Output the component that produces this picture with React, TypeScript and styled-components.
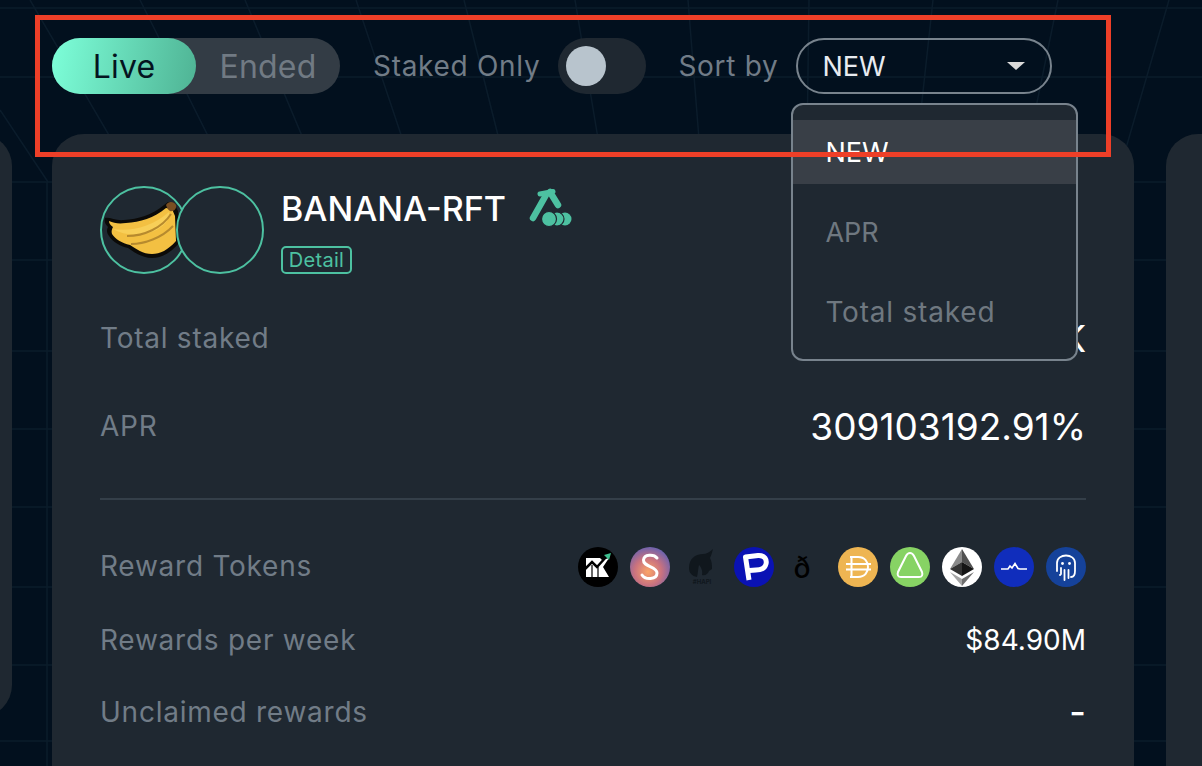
import styled, { createGlobalStyle } from "styled-components";

const GlobalStyle = createGlobalStyle`
  html, body {
    margin: 0;
    padding: 0;
    background: #02101e;
    font-family: "Inter", "Open Sans", sans-serif;
  }
`;

const topLines = [30, 140, 245, 356, 464, 575, 688, 809, 933, 1058, 1169];
const rowLines = [8, 77, 182, 260, 351, 429, 507, 587, 665, 741];

function GridLines() {
  return (
    <GridSvg viewBox="0 0 1202 766">
      {topLines.map((x) => (
        <line key={x} x1={x} y1={0} x2={x + ((791 - x) / 1302) * 766} y2={766} />
      ))}
      {rowLines.map((y) => (
        <line key={y} x1={0} y1={y} x2={1202} y2={y} />
      ))}
      <line x1={0} y1={110} x2={48} y2={182} />
      <line x1={47} y1={182} x2={47} y2={766} />
    </GridSvg>
  );
}

function Banana() {
  return (
    <BananaSvg viewBox="0 0 88 88">
      <path
        d="M5 32 C10 31 16 35 24 34 C38 33 52 29 64 19 L68 16 L74 17 L78 25 L80 56 C72 66 62 72 52 72 C42 72 34 66 28 62 C20 60 13 56 9 50 C6 46 7 43 8 41 C5 38 4 35 5 32 Z"
        fill="#0b0a08"
      />
      <path
        d="M9 35 C14 37 18 38 26 37 C40 36 54 32 66 22 L72 23 L75 30 L76 55 C68 64 60 68 52 68 C43 68 36 63 30 59 C22 57 15 53 12 48 C11 45 12 43 13 41 C10 39 9 37 9 35 Z"
        fill="#f3c042"
      />
      <path
        d="M13 43 C30 46 52 41 69 26 C70 33 66 38 58 43 C46 50 26 51 13 43 Z"
        fill="#f8cf58"
      />
      <path
        d="M31 58 C44 58 62 52 73 40 M27 50 C44 50 62 42 71 28"
        fill="none"
        stroke="#b78a2e"
        strokeWidth={2}
      />
      <path d="M66 19 C68 15 74 15 76 19 C77 23 73 26 70 25 C68 24 67 22 66 19 Z" fill="#7a4f22" />
    </BananaSvg>
  );
}

function PickIcon() {
  return (
    <PickSvg viewBox="0 0 44 40">
      <path d="M4 30 L17 7" stroke="#4dc1a1" strokeWidth={6.5} strokeLinecap="round" fill="none" />
      <path d="M11 6 L24 3.5" stroke="#4dc1a1" strokeWidth={5} strokeLinecap="round" fill="none" />
      <path d="M21 4 L29 17" stroke="#4dc1a1" strokeWidth={6.5} strokeLinecap="round" fill="none" />
      <circle cx={36} cy={31} r={6.5} fill="#4dc1a1" />
      <circle cx={28} cy={31} r={7} fill="#4dc1a1" stroke="#1f2831" strokeWidth={1.2} />
      <circle cx={20} cy={31} r={7.5} fill="#4dc1a1" stroke="#1f2831" strokeWidth={1.2} />
    </PickSvg>
  );
}

function Tokens() {
  return (
    <TokenList>
      <TokenSvg viewBox="0 0 40 40">
        <circle cx={20} cy={20} r={20} fill="#000" />
        <path d="M8 11 H22 L24 13 L31 11 L25 20 L31 30 H8 Z" fill="#fff" />
        <path d="M6 23 L14 15 L19 20 L29 9" fill="none" stroke="#000" strokeWidth={2.5} />
        <path d="M14 18 V30 M20 20 V30" stroke="#000" strokeWidth={1.2} />
        <path d="M26 8 L33 6 L31 13 Z" fill="#3fc08f" />
      </TokenSvg>
      <TokenSvg viewBox="0 0 40 40">
        <defs>
          <radialGradient id="sGrad" cx="45%" cy="62%" r="62%">
            <stop offset="0%" stopColor="#fba568" />
            <stop offset="55%" stopColor="#c9727f" />
            <stop offset="100%" stopColor="#6f63ad" />
          </radialGradient>
        </defs>
        <circle cx={20} cy={20} r={20} fill="url(#sGrad)" />
        <path
          d="M27 11 C24 7 14 7 13.5 13 C13 20 27 19 27 26 C27 33 15 33 12 28"
          fill="none"
          stroke="#fff"
          strokeWidth={3}
          strokeLinecap="round"
        />
      </TokenSvg>
      <TokenSvg viewBox="0 0 40 40">
        <path
          d="M7 21 C7 12 13 7 21 7 C24 7 28 5 31 2 C30 6 29 9 28 11 C30 15 30 18 30 22 L27 24 C26 27 23 29 20 28 C21 24 19 20 17 18 C16 22 16 26 15 30 C10 29 7 26 7 21 Z"
          fill="#10171d"
        />
        <HapiText x={20} y={37} textAnchor="middle">
          #HAPI
        </HapiText>
      </TokenSvg>
      <TokenSvg viewBox="0 0 40 40">
        <circle cx={20} cy={20} r={20} fill="#0a12b4" />
        <path
          d="M15 33 L11.5 10 L24 8.5 C31 8 33 13 32 17 C31 21 27 23 22 23 L15.5 23.5"
          fill="none"
          stroke="#fff"
          strokeWidth={5}
          strokeLinejoin="round"
        />
      </TokenSvg>
      <EthGlyph>ð</EthGlyph>
      <TokenSvg viewBox="0 0 40 40">
        <circle cx={20} cy={20} r={20} fill="#eeb552" />
        <path
          d="M12 10 H20 C27 10 30 15 30 20 C30 25 27 30 20 30 H12 M13.5 10 V30 M8 17 H33 M8 22.5 H33"
          fill="none"
          stroke="#fff"
          strokeWidth={2}
        />
      </TokenSvg>
      <TokenSvg viewBox="0 0 40 40">
        <circle cx={20} cy={20} r={20} fill="#87d364" />
        <path
          d="M20 6 C22 6 23 7 24 9 L32 25 C33 28 32 30 29 30 H11 C8 30 7 28 8 25 L16 9 C17 7 18 6 20 6 Z"
          fill="none"
          stroke="#fff"
          strokeWidth={2}
        />
      </TokenSvg>
      <TokenSvg viewBox="0 0 40 40">
        <circle cx={20} cy={20} r={20} fill="#fff" />
        <path d="M20 2 L8 22 L20 15 Z" fill="#8a8a8a" />
        <path d="M20 2 L32 22 L20 15 Z" fill="#505050" />
        <path d="M8 22 L20 15 V29 Z" fill="#343434" />
        <path d="M32 22 L20 15 V29 Z" fill="#141414" />
        <path d="M8 25 L20 32 V39 Z" fill="#a4a4a4" />
        <path d="M32 25 L20 32 V39 Z" fill="#6e6e6e" />
      </TokenSvg>
      <TokenSvg viewBox="0 0 40 40">
        <circle cx={20} cy={20} r={20} fill="#102dbc" />
        <path
          d="M7 22 H14 L16 19 L18 21 L21 16.5 L24 21.5 L26 22 H33"
          fill="none"
          stroke="#fff"
          strokeWidth={1.6}
        />
      </TokenSvg>
      <TokenSvg viewBox="0 0 40 40">
        <circle cx={20} cy={20} r={20} fill="#15429a" />
        <path
          d="M11 24 V16 C11 6 29 6 29 16 V24 C29 29 27 30 25 30 M15 21 V27 M18.5 23 V33 M22.5 23 V31 M15 27 L14 28"
          fill="none"
          stroke="#fff"
          strokeWidth={1.8}
          strokeLinecap="round"
        />
        <circle cx={16.5} cy={16.5} r={1.4} fill="#fff" />
        <circle cx={23.5} cy={16.5} r={1.4} fill="#fff" />
      </TokenSvg>
    </TokenList>
  );
}

function App() {
  return (
    <Page>
      <GlobalStyle />
      <GridLines />
      <Toolbar>
        <Tabs>
          <Tab $active>Live</Tab>
          <Tab>Ended</Tab>
        </Tabs>
        <ToolLabel $left={33} $right={18}>
          Staked Only
        </ToolLabel>
        <Toggle>
          <Knob />
        </Toggle>
        <ToolLabel $left={32} $right={18}>
          Sort by
        </ToolLabel>
        <SelectWrap>
          <Select>
            NEW
            <Caret />
          </Select>
          <Menu>
            <MenuItem $active>NEW</MenuItem>
            <MenuItem>APR</MenuItem>
            <MenuItem $spread>Total staked</MenuItem>
          </Menu>
        </SelectWrap>
      </Toolbar>
      <Cards>
        <SideCard />
        <Card>
          <CardHeader>
            <Avatars>
              <Avatar>
                <Banana />
              </Avatar>
              <Avatar />
            </Avatars>
            <TitleBlock>
              <TitleRow>
                <Title>BANANA-RFT</Title>
                <PickIcon />
              </TitleRow>
              <DetailTag>Detail</DetailTag>
            </TitleBlock>
          </CardHeader>
          <BigRow>
            <Label>Total staked</Label>
            <BigValue>$1.63K</BigValue>
          </BigRow>
          <BigRow>
            <Label>APR</Label>
            <BigValue>309103192.91%</BigValue>
          </BigRow>
          <Divider />
          <Row $top={47}>
            <RowLabel>Reward Tokens</RowLabel>
            <Tokens />
          </Row>
          <Row $top={34}>
            <RowLabel>Rewards per week</RowLabel>
            <Value>$84.90M</Value>
          </Row>
          <Row $top={32}>
            <RowLabel>Unclaimed rewards</RowLabel>
            <DashValue>-</DashValue>
          </Row>
        </Card>
        <RightCard />
      </Cards>
      <Highlight />
    </Page>
  );
}

const Page = styled.div`
  position: relative;
  height: 100vh;
  overflow: hidden;
  padding-top: 38px;
  box-sizing: border-box;
`;

const GridSvg = styled.svg`
  position: absolute;
  inset: 0;
  width: 100%;
  height: 100%;
  line {
    stroke: #0b1c2b;
    stroke-width: 1.5;
  }
`;

const Toolbar = styled.div`
  position: relative;
  z-index: 2;
  display: flex;
  align-items: center;
  height: 56px;
  margin-left: 52px;
`;

const Tabs = styled.div`
  display: flex;
  width: 288px;
  height: 56px;
  border-radius: 28px;
  background: #333c45;
`;

const Tab = styled.div<{ $active?: boolean }>`
  width: 144px;
  height: 56px;
  border-radius: 28px;
  display: flex;
  align-items: center;
  justify-content: center;
  font-size: 32px;
  letter-spacing: 0.2px;
  color: ${(p) => (p.$active ? "#04141f" : "#717a83")};
  background: ${(p) =>
    p.$active ? "linear-gradient(100deg, #7dffd9 0%, #4fb394 100%)" : "transparent"};
`;

const ToolLabel = styled.div<{ $left: number; $right: number }>`
  margin-left: ${(p) => p.$left}px;
  margin-right: ${(p) => p.$right}px;
  font-size: 28px;
  letter-spacing: 0.7px;
  color: #717c87;
  white-space: nowrap;
`;

const Toggle = styled.div`
  width: 88px;
  height: 56px;
  border-radius: 28px;
  background: #1f2831;
  display: flex;
  align-items: center;
  padding-left: 8px;
  box-sizing: border-box;
`;

const Knob = styled.div`
  width: 40px;
  height: 40px;
  border-radius: 50%;
  background: #b8c4cd;
`;

const SelectWrap = styled.div`
  position: relative;
`;

const Select = styled.div`
  width: 256px;
  height: 56px;
  box-sizing: border-box;
  border: 2px solid #78838d;
  border-radius: 28px;
  padding: 0 25px 0 24px;
  display: flex;
  align-items: center;
  justify-content: space-between;
  font-size: 27px;
  color: #e8ebf0;
`;

const Caret = styled.span`
  width: 0;
  height: 0;
  border-left: 9px solid transparent;
  border-right: 9px solid transparent;
  border-top: 8px solid #d9d9d9;
`;

const Menu = styled.div`
  position: absolute;
  left: -5px;
  top: 65px;
  width: 287px;
  height: 258px;
  box-sizing: border-box;
  padding: 15px 0;
  display: flex;
  flex-direction: column;
  gap: 16px;
  border: 2px solid #78838d;
  border-radius: 12px;
  background: #1f2831;
`;

const MenuItem = styled.div<{ $active?: boolean; $spread?: boolean }>`
  height: 64px;
  flex-shrink: 0;
  display: flex;
  align-items: center;
  padding-left: 32px;
  font-size: ${(p) => (p.$spread ? 28 : 27)}px;
  letter-spacing: ${(p) => (p.$spread ? 0.8 : 0)}px;
  color: ${(p) => (p.$active ? "#ffffff" : "#6f7880")};
  background: ${(p) => (p.$active ? "#393f47" : "transparent")};
`;

const Cards = styled.div`
  display: flex;
  align-items: flex-start;
  margin-top: 40px;
  position: relative;
`;

const SideCard = styled.div`
  width: 1082px;
  height: 583px;
  margin-left: -1070px;
  margin-right: 40px;
  background: #1f2831;
  border-radius: 32px;
  flex-shrink: 0;
`;

const Card = styled.div`
  width: 1082px;
  height: 700px;
  box-sizing: border-box;
  padding: 52px 48px 0;
  background: #1f2831;
  border-radius: 32px 32px 0 0;
  flex-shrink: 0;
`;

const RightCard = styled.div`
  width: 1082px;
  height: 700px;
  margin-left: 32px;
  background: #1f2831;
  border-radius: 32px 32px 0 0;
  flex-shrink: 0;
`;

const CardHeader = styled.div`
  display: flex;
  height: 88px;
  margin-bottom: 20px;
`;

const Avatars = styled.div`
  display: flex;
`;

const Avatar = styled.div`
  position: relative;
  width: 88px;
  height: 88px;
  box-sizing: border-box;
  border: 2px solid #4dc1a1;
  border-radius: 50%;
  background: #1f2831;
  & + & {
    margin-left: -12px;
  }
`;

const BananaSvg = styled.svg`
  position: absolute;
  left: -2px;
  top: -2px;
  width: 88px;
  height: 88px;
`;

const PickSvg = styled.svg`
  width: 44px;
  height: 40px;
  margin-left: 23px;
`;

const TitleBlock = styled.div`
  margin-left: 17px;
  display: flex;
  flex-direction: column;
  align-items: flex-start;
`;

const TitleRow = styled.div`
  display: flex;
  align-items: center;
  height: 48px;
`;

const Title = styled.div`
  font-size: 34px;
  font-weight: 500;
  color: #ffffff;
  white-space: nowrap;
`;

const DetailTag = styled.div`
  margin-top: 15px;
  width: 71px;
  height: 30px;
  box-sizing: border-box;
  border: 2px solid #4dc1a1;
  border-radius: 5px;
  display: flex;
  align-items: center;
  justify-content: center;
  font-size: 20px;
  letter-spacing: 0.3px;
  color: #4dc1a1;
`;

const BigRow = styled.div`
  height: 88px;
  display: flex;
  align-items: center;
  justify-content: space-between;
`;

const Row = styled.div<{ $top: number }>`
  margin-top: ${(p) => p.$top}px;
  height: 40px;
  display: flex;
  align-items: center;
  justify-content: space-between;
`;

const Label = styled.div`
  font-size: 28px;
  letter-spacing: 0.75px;
  color: #717c87;
`;

const RowLabel = styled(Label)`
  padding-bottom: 2px;
`;

const BigValue = styled.div`
  font-size: 37px;
  color: #ffffff;
`;

const Value = styled.div`
  font-size: 28px;
  padding-bottom: 2px;
  color: #ffffff;
`;

const DashValue = styled.div`
  font-size: 36px;
  font-weight: 500;
  padding-bottom: 2px;
  color: #ffffff;
`;

const Divider = styled.div`
  margin-top: 28px;
  height: 2px;
  background: #343f49;
`;

const TokenList = styled.div`
  display: flex;
  gap: 12px;
`;

const TokenSvg = styled.svg`
  width: 40px;
  height: 40px;
  flex-shrink: 0;
`;

const HapiText = styled.text`
  font-size: 6px;
  font-weight: 700;
  fill: #10171d;
`;

const EthGlyph = styled.div`
  width: 40px;
  height: 40px;
  display: flex;
  align-items: center;
  justify-content: center;
  font-size: 29px;
  font-weight: 500;
  color: #000;
  padding-right: 8px;
  box-sizing: border-box;
`;

const Highlight = styled.div`
  position: absolute;
  z-index: 3;
  left: 35px;
  top: 15px;
  width: 1076px;
  height: 142px;
  box-sizing: border-box;
  border: 5px solid #ee3f28;
  pointer-events: none;
`;

export default App;
